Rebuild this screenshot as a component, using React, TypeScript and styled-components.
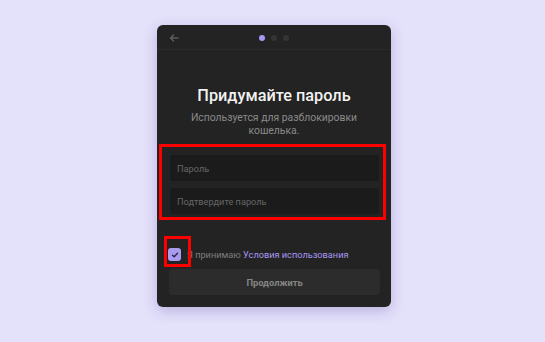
import React from "react";
import styled, { createGlobalStyle } from "styled-components";

const Global = createGlobalStyle`
  html, body { margin: 0; padding: 0; background: #e4e1fb; }
  body { font-family: Roboto, "Noto Sans", sans-serif; }
  * { box-sizing: border-box; }
`;

const Page = styled.div`
  width: 545px;
  height: 342px;
  padding: 25px 0 0 157px;
`;

const Card = styled.div`
  width: 234px;
  height: 282px;
  background: #232323;
  border-radius: 6px;
  box-shadow: 0 4px 14px rgba(60, 40, 140, 0.25);
  display: flex;
  flex-direction: column;
`;

const Header = styled.div`
  height: 25px;
  border-bottom: 1px solid #2b2b2b;
  display: flex;
  align-items: center;
  justify-content: center;
  position: relative;
`;

const Back = styled.div`
  position: absolute;
  left: 12px;
  top: 8px;
  display: flex;
`;

const Dots = styled.div`
  display: flex;
  gap: 6px;
  margin-top: 1px;
`;

const Dot = styled.span<{ $active?: boolean }>`
  width: 6px;
  height: 6px;
  border-radius: 50%;
  background: ${(p) => (p.$active ? "#a598f2" : "#353535")};
`;

const Body = styled.div`
  flex: 1;
  display: flex;
  flex-direction: column;
  padding: 0 12px 11px 12px;
`;

const Title = styled.h1`
  margin: 36px 0 0 0;
  font-size: 16.3px;
  line-height: 20px;
  font-weight: 500;
  color: #f2f2f2;
  text-align: center;
`;

const Subtitle = styled.p`
  margin: 5px auto 0 auto;
  width: 176px;
  font-size: 10.4px;
  line-height: 13px;
  color: #8a8a8a;
  text-align: center;
`;

const Fields = styled.div`
  position: relative;
  display: flex;
  flex-direction: column;
  gap: 7px;
  margin: 18px 0 0 1px;
  width: 209px;
`;

const Input = styled.input`
  height: 26px;
  width: 100%;
  border: none;
  outline: none;
  border-radius: 3px;
  background: #1b1b1b;
  padding: 0 7px;
  font-family: inherit;
  font-size: 9.2px;
  color: #ddd;
  &::placeholder { color: #666; }
`;

const Highlight = styled.div<{ $t: number; $r: number; $b: number; $l: number }>`
  position: absolute;
  top: ${(p) => p.$t}px;
  right: ${(p) => p.$r}px;
  bottom: ${(p) => p.$b}px;
  left: ${(p) => p.$l}px;
  border: 3px solid #ff0000;
  pointer-events: none;
`;

const AgreeRow = styled.label`
  display: flex;
  align-items: center;
  gap: 6px;
  margin: 34px 0 0 -1px;
  font-size: 9.2px;
  color: #7d7d7d;
`;

const BoxWrap = styled.span`
  position: relative;
  display: flex;
`;

const Check = styled.span`
  width: 13px;
  height: 13px;
  border-radius: 3px;
  background: #a99cf0;
  display: flex;
  align-items: center;
  justify-content: center;
`;

const Link = styled.span`
  color: #a598f2;
`;

const Button = styled.button`
  margin-top: 8px;
  height: 26px;
  width: 211px;
  border: none;
  border-radius: 4px;
  background: #2c2c2c;
  color: #858585;
  font-family: inherit;
  font-size: 9.3px;
  font-weight: 700;
`;

export default function App() {
  return (
    <>
      <Global />
      <Page>
        <Card>
          <Header>
            <Back>
              <svg width="10" height="10" viewBox="0 0 10 10" fill="none" stroke="#5e5e5e" strokeWidth="1.4" strokeLinecap="round" strokeLinejoin="round">
                <path d="M9 5H1.5M4.5 2L1.5 5l3 3" />
              </svg>
            </Back>
            <Dots>
              <Dot $active />
              <Dot />
              <Dot />
            </Dots>
          </Header>
          <Body>
            <Title>Придумайте пароль</Title>
            <Subtitle>Используется для разблокировки кошелька.</Subtitle>
            <Fields>
              <Input type="password" placeholder="Пароль" />
              <Input type="password" placeholder="Подтвердите пароль" />
              <Highlight $t={-11} $r={-7} $b={-6} $l={-11} />
            </Fields>
            <AgreeRow>
              <BoxWrap>
                <Check>
                  <svg width="8" height="8" viewBox="0 0 8 8" fill="none" stroke="#2a2540" strokeWidth="1.4" strokeLinecap="round" strokeLinejoin="round">
                    <path d="M1.5 4.2L3.2 5.8 6.5 2.2" />
                  </svg>
                </Check>
                <Highlight $t={-12} $r={-10} $b={-6} $l={-4} />
              </BoxWrap>
              <span>
                Я принимаю <Link>Условия использования</Link>
              </span>
            </AgreeRow>
            <Button>Продолжить</Button>
          </Body>
        </Card>
      </Page>
    </>
  );
}
